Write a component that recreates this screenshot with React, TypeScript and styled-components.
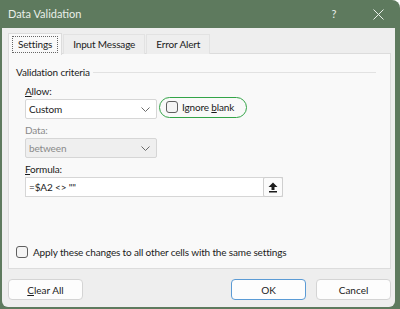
import styled, { createGlobalStyle } from 'styled-components';

const GlobalStyle = createGlobalStyle`
  html, body {
    margin: 0;
    padding: 0;
    background: #ffffff;
  }
  body {
    font-family: Lato, 'Noto Sans', sans-serif;
    font-size: 10px;
    line-height: 14px;
    letter-spacing: -0.15px;
    color: #1b1b1b;
  }
`;

const Frame = styled.div`
  width: 400px;
  height: 309px;
  background: #5e7a5e;
  border-top-right-radius: 8px;
  display: flex;
  flex-direction: column;
  overflow: hidden;
`;

const TitleBar = styled.div`
  height: 28px;
  flex-shrink: 0;
  display: flex;
  align-items: center;
  padding: 0 0 0 8px;
  color: #e9efe9;
  font-size: 11px;
  letter-spacing: 0;
`;

const Title = styled.span`
  flex: 1;
`;

const TitleButton = styled.span`
  width: 44px;
  display: flex;
  justify-content: center;
  align-items: center;
  color: #e9efe9;
`;

const Body = styled.div`
  flex: 1;
  margin: 0 5px 2px 2px;
  background: #eeeeee;
  border-radius: 0 0 6px 6px;
  padding: 5px 4px 7px 6px;
  display: flex;
  flex-direction: column;
`;

const TabRow = styled.div`
  display: flex;
  height: 21px;
  position: relative;
  z-index: 1;
`;

const Tab = styled.div<{ $active?: boolean }>`
  height: ${(p) => (p.$active ? '21px' : '19px')};
  margin-top: ${(p) => (p.$active ? '0' : '1px')};
  padding: 0 3px;
  display: flex;
  align-items: center;
  background: ${(p) => (p.$active ? '#f9f9f9' : '#eeeeee')};
  border: 1px solid ${(p) => (p.$active ? '#dcdcdc' : '#e2e2e2')};
  border-bottom: none;
  margin-right: 1px;
`;

const TabLabel = styled.span<{ $focused?: boolean }>`
  padding: 1px 5px;
  line-height: 13px;
  border: 1px dotted ${(p) => (p.$focused ? '#666' : 'transparent')};
`;

const Panel = styled.div`
  height: 216px;
  box-sizing: border-box;
  background: #f9f9f9;
  border: 1px solid #dcdcdc;
  margin-top: -1px;
  display: flex;
  flex-direction: column;
  padding: 10px 8px 0 7px;
`;

const GroupHeader = styled.div`
  display: flex;
  align-items: center;
  gap: 3px;
  height: 16px;
  padding-right: 6px;
`;

const GroupLine = styled.div`
  flex: 1;
  height: 1px;
  background: #e2e2e2;
`;

const Group = styled.div`
  padding-left: 9px;
  display: flex;
  flex-direction: column;
`;

const Label = styled.div<{ $disabled?: boolean }>`
  margin-top: 4px;
  margin-bottom: 1px;
  height: 14px;
  color: ${(p) => (p.$disabled ? '#8a8a8a' : '#1b1b1b')};
`;

const Row = styled.div`
  display: flex;
  align-items: center;
`;

const Select = styled.div<{ $disabled?: boolean }>`
  width: 132px;
  height: 20px;
  box-sizing: border-box;
  background: ${(p) => (p.$disabled ? '#efefef' : '#ffffff')};
  color: ${(p) => (p.$disabled ? '#8a8a8a' : '#1b1b1b')};
  border: 1px solid #d6d6d6;
  border-radius: 2px;
  display: flex;
  align-items: center;
  padding: 0 6px 0 3px;
`;

const SelectText = styled.span`
  flex: 1;
`;

const Highlight = styled.div`
  margin-left: 2px;
  margin-top: -4px;
  width: 88px;
  height: 21px;
  box-sizing: border-box;
  border: 1.5px solid #33a447;
  border-radius: 11px;
  display: flex;
  align-items: center;
  padding-left: 6px;
  gap: 4px;
  white-space: nowrap;
`;

const Box = styled.span`
  width: 12px;
  height: 12px;
  box-sizing: border-box;
  border: 1px solid #5f5f5f;
  border-radius: 3px;
  background: #f4f4f4;
  flex-shrink: 0;
`;

const FormulaInput = styled.div`
  width: 258px;
  height: 20px;
  box-sizing: border-box;
  background: #ffffff;
  border: 1px solid #d6d6d6;
  display: flex;
  align-items: center;
  padding-left: 3px;
`;

const FormulaText = styled.span`
  flex: 1;
`;

const CollapseButton = styled.div`
  width: 20px;
  height: 20px;
  margin: -1px -1px -1px 0;
  box-sizing: border-box;
  border: 1px solid #cfcfcf;
  border-radius: 2px;
  background: #fbfbfb;
  display: flex;
  align-items: center;
  justify-content: center;
`;

const ApplyRow = styled.label`
  margin-top: 48px;
  display: flex;
  align-items: center;
  gap: 5px;
  white-space: nowrap;
`;

const Footer = styled.div`
  margin-top: 10px;
  display: flex;
  gap: 10px;
`;

const Button = styled.button<{ $primary?: boolean }>`
  width: 75px;
  height: 21px;
  font-family: inherit;
  font-size: 10px;
  color: #1b1b1b;
  background: #fdfdfd;
  border: 1px solid ${(p) => (p.$primary ? '#5b9bd5' : '#d4d4d4')};
  border-radius: 4px;
  padding: 0;
`;

const Spacer = styled.div`
  flex: 1;
`;

const Chevron = () => (
  <svg width="9" height="5" viewBox="0 0 9 5">
    <path d="M0.5 0.5 L4.5 4.5 L8.5 0.5" fill="none" stroke="#6a6a6a" strokeWidth="1" />
  </svg>
);

export default function App() {
  return (
    <>
      <GlobalStyle />
      <Frame>
        <TitleBar>
          <Title>Data Validation</Title>
          <TitleButton>?</TitleButton>
          <TitleButton>
            <svg width="11" height="11" viewBox="0 0 11 11">
              <path d="M0.5 0.5 L10.5 10.5 M10.5 0.5 L0.5 10.5" stroke="#e9efe9" strokeWidth="1" />
            </svg>
          </TitleButton>
        </TitleBar>
        <Body>
          <TabRow>
            <Tab $active>
              <TabLabel $focused>Settings</TabLabel>
            </Tab>
            <Tab>
              <TabLabel>Input Message</TabLabel>
            </Tab>
            <Tab>
              <TabLabel>Error Alert</TabLabel>
            </Tab>
          </TabRow>
          <Panel>
            <GroupHeader>
              Validation criteria
              <GroupLine />
            </GroupHeader>
            <Group>
              <Label>
                <u>A</u>llow:
              </Label>
              <Row>
                <Select>
                  <SelectText>Custom</SelectText>
                  <Chevron />
                </Select>
                <Highlight>
                  <Box />
                  <span>
                    Ignore <u>b</u>lank
                  </span>
                </Highlight>
              </Row>
              <Label $disabled>Data:</Label>
              <Select $disabled>
                <SelectText>between</SelectText>
                <Chevron />
              </Select>
              <Label>
                <u>F</u>ormula:
              </Label>
              <FormulaInput>
                <FormulaText>=$A2 &lt;&gt; ""</FormulaText>
                <CollapseButton>
                  <svg width="10" height="11" viewBox="0 0 10 11">
                    <path d="M5 0.5 L9.5 5 L6.5 5 L6.5 8 L3.5 8 L3.5 5 L0.5 5 Z" fill="#1b1b1b" />
                    <rect x="1" y="9" width="8" height="1.5" fill="#1b1b1b" />
                  </svg>
                </CollapseButton>
              </FormulaInput>
            </Group>
            <ApplyRow>
              <Box />
              <span>
                Apply these changes to all other cells with the same settings
              </span>
            </ApplyRow>
          </Panel>
          <Footer>
            <Button>
              <u>C</u>lear All
            </Button>
            <Spacer />
            <Button $primary>OK</Button>
            <Button>Cancel</Button>
          </Footer>
        </Body>
      </Frame>
    </>
  );
}
